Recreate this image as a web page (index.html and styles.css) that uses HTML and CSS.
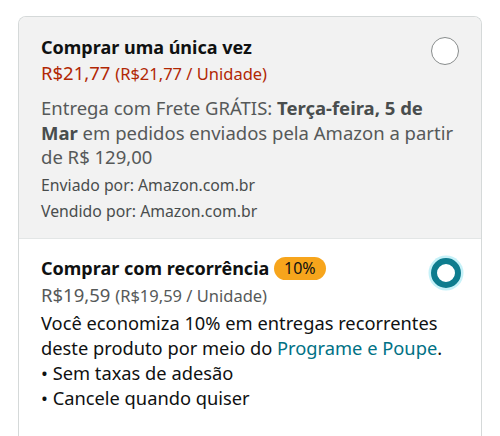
FILE: index.html
```html
<!DOCTYPE html>
<html lang="pt-BR">
<head>
    <meta charset="UTF-8">
    <meta name="viewport" content="width=device-width, initial-scale=1.0">
    <title>Opções de compra</title>
    <link rel="stylesheet" href="styles.css">
</head>
<body>

<div class="card">
    <div class="option option-once">
        <span class="radio"></span>
        <div class="title">Comprar uma única vez</div>
        <div class="price red">R$21,77 <span class="unit">(R$21,77 / Unidade)</span></div>
        <div class="delivery">Entrega com Frete GRÁTIS: <b>Terça-feira, 5 de Mar</b> em pedidos enviados pela Amazon a partir de R$ 129,00</div>
        <div class="small">Enviado por: Amazon.com.br</div>
        <div class="small">Vendido por: Amazon.com.br</div>
    </div>

    <div class="option option-sub">
        <span class="radio checked"></span>
        <div class="title">Comprar com recorrência <span class="badge">10%</span></div>
        <div class="price grey">R$19,59 <span class="unit">(R$19,59 / Unidade)</span></div>
        <div class="text">Você economiza 10% em entregas recorrentes deste produto por meio do <a href="#" class="link">Programe e Poupe</a>.</div>
        <div class="text">• Sem taxas de adesão</div>
        <div class="text">• Cancele quando quiser</div>
    </div>
</div>

</body>
</html>
```

FILE: styles.css
```css
body {
    font-family: "Noto Sans", Roboto, sans-serif;
    background-color: #fff;
    color: #0f1111;
    margin: 0;
    padding: 16px 18px 0;
}
.card {
    border: 1px solid #d5d9d9;
    border-bottom: none;
    border-radius: 8px 8px 0 0;
    overflow: hidden;
}
.option {
    padding: 17px 22px 14px;
}
.option-once {
    background: #f2f2f2;
    border-bottom: 1px solid #e3e6e6;
}
.option-sub {
    padding-top: 16px;
    padding-bottom: 30px;
}
.title {
    font-size: 18px;
    font-weight: bold;
    line-height: 26px;
}
.price {
    font-size: 18.5px;
    line-height: 26px;
}
.option-sub .price {
    line-height: 28px;
}
.price .unit {
    font-size: 16.5px;
}
.red {
    color: #b12704;
}
.grey {
    color: #565959;
}
.delivery {
    font-size: 18.5px;
    line-height: 24.5px;
    color: #565959;
    margin-top: 9px;
}
.delivery b {
    color: #494d4d;
}
.small {
    font-size: 15.8px;
    line-height: 26px;
    color: #494d4d;
    margin-top: 2px;
}
.small + .small {
    margin-top: 0;
}
.text {
    font-size: 18.3px;
    line-height: 25.3px;
}
.link {
    color: #007185;
    text-decoration: none;
}
.badge {
    display: inline-block;
    background: #f7a51c;
    color: #0f1111;
    font-size: 16px;
    font-weight: normal;
    line-height: 23px;
    padding: 0 10px;
    border-radius: 12px;
    vertical-align: 1px;
}
.radio {
    float: right;
    width: 26px;
    height: 26px;
    border: 1.5px solid #888c8c;
    border-radius: 50%;
    background: #fff;
    margin: 3px 0 0 12px;
}
.radio.checked {
    width: 18px;
    height: 18px;
    border: 6px solid #0e7c8e;
    box-shadow: 0 0 0 2.5px #c6f1f8;
    margin: 3px -2px 0 12px;
}
```
